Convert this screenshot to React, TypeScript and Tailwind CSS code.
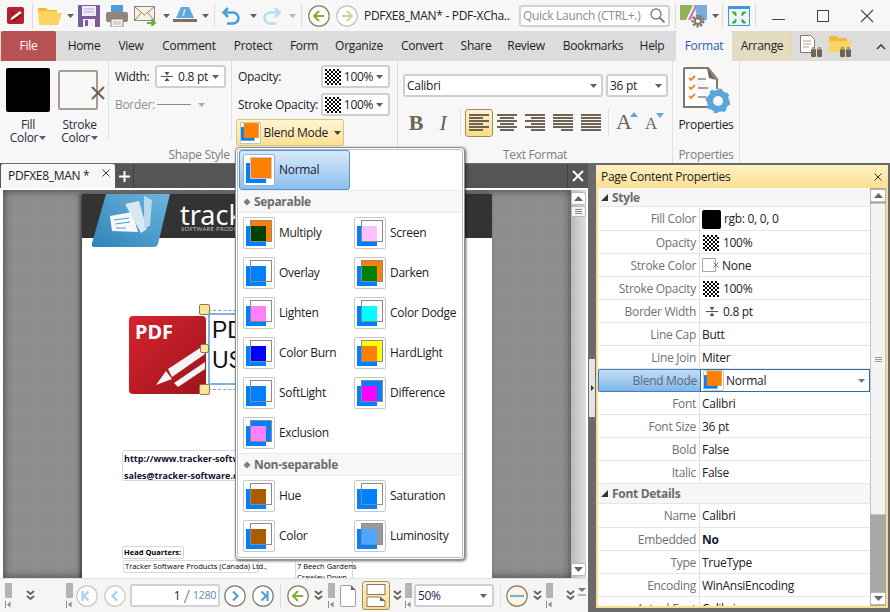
import React from "react"

const Caret = ({ className = "ml-[5px]", color = "#5f5f5f" }: { className?: string; color?: string }) => (
  <svg width="7" height="4" viewBox="0 0 7 4" className={`shrink-0 ${className}`}>
    <path d="M0 0h7L3.5 4z" fill={color} />
  </svg>
)

const Sep = ({ className = "" }: { className?: string }) => <div className={`w-px self-stretch my-[3px] bg-[#dcdcdc] shrink-0 ${className}`} />

const NavCircle = ({ className = "", dir = "left", color = "#7fb035", ring = "#8a7a68" }: { className?: string; dir?: "left" | "right"; color?: string; ring?: string }) => (
  <svg width="22" height="22" viewBox="0 0 22 22" className={`shrink-0 ${className}`}>
    <circle cx="11" cy="11" r="10.2" fill="#fff" stroke={ring} strokeWidth="1.2" />
    <g transform={dir === "right" ? "translate(22 0) scale(-1 1)" : undefined}>
      <path d="M11 6l-5 5 5 5M6 11h10" fill="none" stroke={color} strokeWidth="2" />
    </g>
  </svg>
)

const NavChevron = ({ className = "", dir = "left", edge = false, faded = false }: { className?: string; dir?: "left" | "right"; edge?: boolean; faded?: boolean }) => (
  <svg width="22" height="22" viewBox="0 0 22 22" className={`shrink-0 ${className}`}>
    <circle cx="11" cy="11" r="10.2" fill="#fff" stroke={faded ? "#d0c8be" : "#8a7a68"} strokeWidth="1.2" />
    <g transform={dir === "right" ? "translate(22 0) scale(-1 1)" : undefined}>
      <path d={edge ? "M12.5 6.5L8 11l4.5 4.5" : "M13 6.5L8.5 11l4.5 4.5"} fill="none" stroke={faded ? "#a8d0ea" : "#4da0d8"} strokeWidth="2.2" />
      {edge && <path d="M6.5 6v10" stroke={faded ? "#a8d0ea" : "#4da0d8"} strokeWidth="2.2" />}
    </g>
  </svg>
)

const Chevs = ({ className = "" }: { className?: string }) => (
  <svg width="9" height="12" viewBox="0 0 9 12" className={`shrink-0 ${className}`}>
    <path d="M1 1l3.5 3L8 1M1 6l3.5 3L8 6" fill="none" stroke="#6b6357" strokeWidth="1.8" />
  </svg>
)

const Grip = ({ className = "" }: { className?: string }) => (
  <div className={`flex flex-col items-center shrink-0 w-[8px] ${className}`}>
    <div className="w-[7px] h-[15px] bg-[radial-gradient(#b4b4b4_0.8px,transparent_0.9px)] bg-[length:2px_2px]" />
    <svg width="6" height="7" viewBox="0 0 6 7" className="mt-[3px]">
      <path d="M0.5 0v7" stroke="#8a8a8a" />
      <path d="M5.5 0.5v6L2 3.500z" fill="#8a8a8a" />
    </svg>
  </div>
)

const Checker = ({ size = 16 }: { size?: number }) => (
  <svg width={size} height={size} viewBox="0 0 16 16" className="shrink-0">
    <defs>
      <pattern id="chk" width="4" height="4" patternUnits="userSpaceOnUse">
        <rect width="4" height="4" fill="#fff" />
        <rect width="2" height="2" fill="#000" />
        <rect x="2" y="2" width="2" height="2" fill="#000" />
      </pattern>
    </defs>
    <rect width="16" height="16" fill="url(#chk)" />
  </svg>
)

const WidthGlyph = ({ className = "" }: { className?: string }) => (
  <svg width="14" height="11" viewBox="0 0 14 11" className={`shrink-0 ${className}`}>
    <path d="M1 5.500h12" stroke="#555" />
    <path d="M7 4.500L4.500 1h5zM7 6.500L4.500 10h5z" fill="#555" />
  </svg>
)

const Combo = ({ children, className = "" }: { children: React.ReactNode; className?: string }) => (
  <div className={`flex items-center bg-white border-2 border-[#cfcfcf] rounded-[3px] shrink-0 ${className}`}>{children}</div>
)

const BlendIcon = ({ top, mix, line = "#8a8a8a", scale = 1 }: { top: string; mix: string; line?: string; scale?: number }) => (
  <svg width={27 * scale} height={27 * scale} viewBox="0 0 27 27" className="shrink-0">
    <rect x="0" y="6" width="20" height="20" fill="#0080ff" />
    <rect x="4.500" y="0.500" width="21" height="21" fill={top} stroke={line} />
    <rect x="5" y="6" width="15" height="15" fill={mix} />
  </svg>
)

const blendRows = [
  [
    { name: "Multiply", top: "#ff8000", mix: "#004000" },
    { name: "Screen", top: "#ffffff", mix: "#ffc0ff" },
  ],
  [
    { name: "Overlay", top: "#ffffff", mix: "#0080ff" },
    { name: "Darken", top: "#ff8000", mix: "#008000" },
  ],
  [
    { name: "Lighten", top: "#ffffff", mix: "#ff80ff" },
    { name: "Color Dodge", top: "#ffffff", mix: "#00ffff" },
  ],
  [
    { name: "Color Burn", top: "#ffffff", mix: "#0000ff" },
    { name: "HardLight", top: "#ffff00", mix: "#ff8000" },
  ],
  [
    { name: "SoftLight", top: "#ffffff", mix: "#0080ff" },
    { name: "Difference", top: "#0080ff", mix: "#ff00ff" },
  ],
  [{ name: "Exclusion", top: "#0080ff", mix: "#ff80ff" }],
]

const nonSepRows = [
  [
    { name: "Hue", top: "#ffffff", mix: "#ab5b00" },
    { name: "Saturation", top: "#ffffff", mix: "#0080ff" },
  ],
  [
    { name: "Color", top: "#ffffff", mix: "#ab5b00" },
    { name: "Luminosity", top: "#999999", mix: "#4da6ff" },
  ],
]

const BlendGrid = ({ rows }: { rows: { name: string; top: string; mix: string }[][] }) => (
  <div className="flex flex-col">
    {rows.map((row, i) => (
      <div key={i} className="grid grid-cols-[111px_1fr] h-[40px] pl-[5px]">
        {row.map((m) => (
          <div key={m.name} className="flex items-start">
            <div className="w-[32px] h-[32px] mt-[4px] flex items-center justify-center bg-white border border-[#c8c8c8] rounded-[2px] shrink-0">
              <BlendIcon top={m.top} mix={m.mix} />
            </div>
            <span className="ml-[4px] mt-[12px] leading-[16px] whitespace-nowrap">{m.name}</span>
          </div>
        ))}
      </div>
    ))}
  </div>
)

const BlendHeader = ({ label }: { label: string }) => (
  <div className="h-[23px] mx-[1px] flex items-center pl-[4px] pt-[1px] bg-[#f7f7f7] border-y border-[#ebebeb] font-bold text-[#6c6c6c]">
    <svg width="8" height="8" viewBox="0 0 8 8" className="mr-[3px]">
      <path d="M4 0.500L7.500 4 4 7.500.5 4z" fill="#7d7d7d" />
    </svg>
    {label}
  </div>
)

const BlendPopup = () => (
  <div className="absolute left-[235px] top-[147px] w-[230px] h-[413px] z-20 bg-white border border-[#8c8c8c] rounded-[4px] p-[1px] shadow-[1px_1px_3px_rgba(0,0,0,0.6)] text-[#1b1b2b]">
    <div className="w-full h-full border border-[#bdbdbd] rounded-[3px] bg-white">
      <div className="flex items-center w-[111px] h-[40px] ml-[1px] pl-[3px] bg-[linear-gradient(#d8e9f9,#8dbfec)] border border-[#4f95d6] rounded-[3px]">
        <div className="w-[32px] h-[32px] flex items-center justify-center bg-white border border-[#9cb4ca] rounded-[2px]">
          <BlendIcon top="#ff8000" mix="#ff8000" line="#c8c8c8" />
        </div>
        <span className="ml-[4px]">Normal</span>
      </div>
      <BlendHeader label="Separable" />
      <BlendGrid rows={blendRows} />
      <BlendHeader label="Non-separable" />
      <BlendGrid rows={nonSepRows} />
    </div>
  </div>
)

const TitleBar = () => (
  <div className="flex items-center h-[31px] pl-[7px] bg-[#f7f7f7] shrink-0">
    <svg width="17" height="17" viewBox="0 0 17 17" className="shrink-0">
      <rect width="17" height="17" rx="2" fill="#b3222c" />
      <path d="M3 13l2-3 8-6 1.500 2-8 6z" fill="#fff" />
      <path d="M6 13l8-5.500v1.500l-7 5zM3 6h5" stroke="#7c151c" fill="none" />
    </svg>
    <Sep className="ml-[8px]" />
    <svg width="24" height="20" viewBox="0 0 24 20" className="ml-[5px] shrink-0">
      <path d="M0 2h8l2 2h9v3H0z" fill="#f3b93e" />
      <path d="M1 19L0 5h19v2h5l-4 12z" fill="#fbd35f" />
    </svg>
    <Caret />
    <svg width="22" height="22" viewBox="0 0 22 22" className="ml-[4px] shrink-0">
      <path d="M0 1a1 1 0 011-1h20a1 1 0 011 1v20a1 1 0 01-1 1H1a1 1 0 01-1-1z" fill="#7c5a9b" />
      <rect x="4" y="1" width="14" height="10" fill="#f0ebf3" />
      <path d="M6 4h10M6 7h10" stroke="#b9a9c8" />
      <rect x="5" y="14" width="12" height="8" fill="#f4f2f6" />
      <rect x="7" y="15" width="3" height="6" fill="#7c5a9b" />
    </svg>
    <svg width="22" height="22" viewBox="0 0 22 22" className="ml-[6px] shrink-0">
      <rect x="5" y="0" width="12" height="7" fill="#4f9bd4" />
      <rect x="0" y="7" width="22" height="10" rx="2" fill="#8f8578" />
      <rect x="5" y="14" width="12" height="8" fill="#f5f5f5" stroke="#8f8578" />
      <path d="M7 17h8M7 19h8" stroke="#b8b0a4" />
    </svg>
    <svg width="24" height="21" viewBox="0 0 24 21" className="ml-[6px] shrink-0">
      <rect x="0.500" y="1.500" width="20" height="14" fill="#f7f2e2" stroke="#8f8578" />
      <path d="M1 2l9.500 8L20 2M1 15l6-7M20 15l-6-7" fill="none" stroke="#8f8578" />
      <path d="M13 18h7M17 14.500l4 3.500-4 3" fill="none" stroke="#71ad38" strokeWidth="2" />
    </svg>
    <Caret />
    <svg width="24" height="17" viewBox="0 0 24 17" className="ml-[3px] shrink-0">
      <path d="M8 0h8l5 11H3z" fill="#5fa8dc" />
      <path d="M11 2h2L11 9H9z" fill="#b7dcf3" />
      <rect x="0" y="12" width="24" height="3" fill="#7c7062" />
    </svg>
    <Caret />
    <Sep className="ml-[5px]" />
    <svg width="18" height="19" viewBox="0 0 18 19" className="ml-[7px] shrink-0">
      <path d="M6 2L1.500 6.500 6 11M2 6.500h9a5.500 5.500 0 010 11H5" fill="none" stroke="#4d9fdb" strokeWidth="2.600" />
    </svg>
    <Caret className="ml-[10px]" />
    <svg width="20" height="19" viewBox="0 0 20 19" className="ml-[5px] shrink-0">
      <path d="M13 2l4.500 4.500L13 11M17 6.500H8a5.500 5.500 0 000 11h6" fill="none" stroke="#b9dcf0" strokeWidth="2.600" />
    </svg>
    <Caret className="ml-[7px]" color="#b4b4b4" />
    <Sep className="ml-[5px]" />
    <NavCircle className="ml-[6px]" />
    <NavCircle className="ml-[6px]" dir="right" color="#bcd89a" ring="#c9c2b8" />
    <span className="ml-[6px] w-[154px] whitespace-nowrap overflow-hidden">PDFXE8_MAN* - PDF-XCha..</span>
    <div className="ml-[1px] w-[151px] h-[22px] flex items-center justify-between bg-white border-2 border-[#d2d2d2] rounded-[3px] pl-[2px] pr-[3px] shrink-0">
      <span className="text-[#8d8d8d] whitespace-nowrap">Quick Launch (CTRL+.)</span>
      <svg width="15" height="15" viewBox="0 0 15 15">
        <circle cx="6" cy="6" r="5" fill="none" stroke="#7b7b7b" strokeWidth="1.300" />
        <path d="M9.500 9.500l5 5" stroke="#7b7b7b" strokeWidth="1.800" />
      </svg>
    </div>
    <Sep className="ml-[5px]" />
    <svg width="28" height="24" viewBox="0 0 28 24" className="ml-[4px] shrink-0">
      <path d="M0 1h13L6 16H0z" fill="#8fb354" />
      <path d="M14 1h13v15H18z" fill="#77aedd" />
      <path d="M15 1L8 16h3l6-15z" fill="#c97fb1" />
      <circle cx="18" cy="17" r="5" fill="none" stroke="#85786a" strokeWidth="3" strokeDasharray="2.200 1.300" />
      <circle cx="18" cy="17" r="3" fill="none" stroke="#85786a" strokeWidth="1.800" />
    </svg>
    <Caret className="ml-[4px]" />
    <Sep className="ml-[3px]" />
    <svg width="22" height="20" viewBox="0 0 22 20" className="ml-[5px] shrink-0">
      <rect x="0.500" y="0.500" width="21" height="19" fill="#eaf6fd" stroke="#3c9ad8" />
      <rect x="0" y="0" width="22" height="3" fill="#3c9ad8" />
      <path d="M4 6l4 4V7l-1-1zM18 6l-4 4V7l1-1zM4 17l4-4v3l-1 1zM18 17l-4-4v3l1 1z" fill="#5da832" stroke="#5da832" />
    </svg>
    <Sep className="ml-[5px]" />
    <div className="ml-[16px] w-[13px] h-px bg-[#444] mt-[8px] shrink-0" />
    <div className="ml-[32px] w-[12px] h-[12px] border border-[#444] shrink-0" />
    <svg width="14" height="14" viewBox="0 0 14 14" className="ml-[31px] shrink-0">
      <path d="M1 1l12 12M13 1L1 13" stroke="#444" strokeWidth="1.100" />
    </svg>
  </div>
)

const tabs = [
  { label: "Home", w: "w-[54px]" },
  { label: "View", w: "w-[40px]" },
  { label: "Comment", w: "w-[76px]" },
  { label: "Protect", w: "w-[52px]" },
  { label: "Form", w: "w-[50px]" },
  { label: "Organize", w: "w-[60px]" },
  { label: "Convert", w: "w-[66px]" },
  { label: "Share", w: "w-[42px]" },
  { label: "Review", w: "w-[58px]" },
  { label: "Bookmarks", w: "w-[76px]" },
  { label: "Help", w: "w-[42px]" },
]

const TabBar = () => (
  <div className="flex items-stretch h-[30px] bg-[#dcdcdc] shrink-0">
    <div className="ml-[1px] w-[55px] bg-[#b95353] text-white flex items-center justify-center rounded-t-[2px]">File</div>
    <div className="ml-[1px] flex">
      {tabs.map((t) => (
        <div key={t.label} className={`${t.w} flex items-center justify-center`}>
          {t.label}
        </div>
      ))}
    </div>
    <div className="ml-[3px] w-[56px] bg-[#f7f7f7] text-[#1f5fa8] flex items-center justify-center rounded-t-[3px]">Format</div>
    <div className="ml-[1px] w-[59px] bg-[#e4dcc0] border-r border-[#eed98f] flex items-center justify-center">Arrange</div>
    <svg width="24" height="24" viewBox="0 0 24 24" className="ml-[7px] mt-[3px] shrink-0">
      <path d="M1.500 1.500h10l4 4v13h-14z" fill="#fff" stroke="#85786a" />
      <path d="M4 7h8M4 10h8M4 13h6" stroke="#a79c8e" />
      <rect x="12" y="15" width="5" height="8" rx="1" fill="#6f6355" />
      <rect x="18" y="15" width="5" height="8" rx="1" fill="#6f6355" />
      <rect x="13" y="13" width="3" height="3" fill="#9d9385" />
      <rect x="19" y="13" width="3" height="3" fill="#9d9385" />
    </svg>
    <svg width="24" height="24" viewBox="0 0 24 24" className="ml-[5px] mt-[3px] shrink-0">
      <path d="M1 2h8l2 2h8v4H1z" fill="#f3b93e" />
      <path d="M1 18V7h23l-4 11z" fill="#fbd35f" />
      <rect x="12" y="15" width="5" height="8" rx="1" fill="#6f6355" />
      <rect x="18" y="15" width="5" height="8" rx="1" fill="#6f6355" />
      <rect x="13" y="13" width="3" height="3" fill="#9d9385" />
      <rect x="19" y="13" width="3" height="3" fill="#9d9385" />
    </svg>
    <svg width="10" height="7" viewBox="0 0 10 7" className="ml-[24px] mt-[12px] shrink-0">
      <path d="M1 6l4-4 4 4" fill="none" stroke="#444" strokeWidth="1.600" />
    </svg>
  </div>
)

const AlignBtn = ({ lines, active = false }: { lines: [number, number][]; active?: boolean }) => (
  <div className={`w-[28px] h-[28px] flex items-center justify-center shrink-0 ${active ? "bg-[linear-gradient(#fdf3cf,#fbdc8a)] border border-[#9f8f5f] rounded-[3px]" : ""}`}>
    <svg width="20" height="20" viewBox="0 0 20 20">
      {lines.map(([x, w], i) => (
        <rect key={i} x={x} y={i * 3 + 1} width={w} height="2" fill="#6f6355" />
      ))}
    </svg>
  </div>
)

const Ribbon = () => (
  <div className="flex h-[102px] bg-[#f7f7f7] shrink-0 relative">
    <div className="w-[397px] ml-[1px] flex flex-col border-r border-[#dfdfdf] shrink-0">
      <div className="flex h-[85px] shrink-0">
        {/* fill / stroke */}
        <div className="w-[108px] h-[85px] flex shrink-0 border-r-0 relative">
          <div className="absolute right-0 top-0 h-[78px] w-px bg-[#dfdfdf]" />
          <div className="w-[44px] ml-[5px] flex flex-col items-center mt-[7px] shrink-0">
            <div className="w-[44px] h-[44px] bg-black rounded-[2px] shrink-0" />
            <div className="mt-[6px] leading-[13px] text-center text-[#2b2b3b]">
              Fill
              <div className="flex items-center">
                Color
                <Caret className="ml-[1px]" />
              </div>
            </div>
          </div>
          <div className="w-[49px] ml-[5px] flex flex-col items-center shrink-0 mt-[7px]">
            <div className="h-[44px] w-[49px] relative shrink-0">
              <div className="absolute left-[3px] top-[2px] w-[40px] h-[40px] bg-[#f7f7f7] border-2 border-[#a99c8d] rounded-[2px]" />
              <svg width="14" height="14" viewBox="0 0 14 14" className="absolute left-[36px] top-[18px]">
                <path d="M1 1l12 12M13 1L1 13" stroke="#6f6355" strokeWidth="2" />
              </svg>
            </div>
            <div className="mt-[6px] leading-[13px] text-center text-[#2b2b3b]">
              Stroke
              <div className="flex items-center justify-center">
                Color
                <Caret className="ml-[1px]" />
              </div>
            </div>
          </div>
        </div>
        {/* width / border */}
        <div className="w-[123px] h-[78px] pl-[6px] pt-[4px] flex flex-col shrink-0 border-r border-[#dfdfdf]">
          <div className="flex items-center h-[23px]">
            <span className="w-[40px]">Width:</span>
            <Combo className="w-[71px] h-[23px] pl-[3px] pr-[5px] justify-between">
              <WidthGlyph />
              <span>0.8 pt</span>
              <Caret className="ml-0" />
            </Combo>
          </div>
          <div className="flex items-center h-[23px] mt-[5px] text-[#8f8f8f]">
            <span className="w-[42px]">Border:</span>
            <div className="w-[34px] h-px bg-[#8f8f8f]" />
            <Caret className="ml-[7px]" color="#a8a8a8" />
          </div>
        </div>
        {/* opacity */}
        <div className="flex flex-col pl-[4px] pt-[4px] relative">
          <div className="flex items-center h-[23px] pl-[2px]">
            <span className="w-[83px] pt-[1px]">Opacity:</span>
            <Combo className="w-[69px] h-[23px] px-[2px] justify-between pr-[5px]">
              <Checker />
              <span>100%</span>
              <Caret className="ml-0" />
            </Combo>
          </div>
          <div className="flex items-center h-[23px] mt-[5px] pl-[2px]">
            <span className="w-[83px] pt-[1px] whitespace-nowrap">Stroke Opacity:</span>
            <Combo className="w-[69px] h-[23px] px-[2px] justify-between pr-[5px]">
              <Checker />
              <span>100%</span>
              <Caret className="ml-0" />
            </Combo>
          </div>
          <div className="flex items-center w-[108px] h-[27px] mt-[3px] pl-[3px] pr-[2px] bg-[linear-gradient(#fff6d2,#fbe096)] border border-[#dcc67f] rounded-[2px]">
            <div className="w-[22px] h-[22px] flex items-center justify-center bg-white border border-[#cfc6a0]">
              <BlendIcon top="#ff8000" mix="#ff8000" line="#ff8000" scale={0.68} />
            </div>
            <span className="ml-[3px] whitespace-nowrap">Blend Mode</span>
            <Caret className="ml-[6px]" color="#444" />
          </div>
        </div>
      </div>
      <div className="h-[17px] pt-[2px] leading-[14px] text-center text-[#7d7d7d]">Shape Style</div>
    </div>
    <div className="w-[275px] flex flex-col border-r border-[#dfdfdf] shrink-0">
      <div className="h-[85px] pl-[5px] pt-[13px] shrink-0">
        <div className="flex">
          <Combo className="w-[200px] h-[23px] pl-[2px] pr-[4px] justify-between">
            <span>Calibri</span>
            <Caret className="ml-0" />
          </Combo>
          <Combo className="ml-[3px] w-[62px] h-[23px] pl-[2px] pr-[4px] justify-between">
            <span>36 pt</span>
            <Caret className="ml-0" />
          </Combo>
        </div>
        <div className="flex items-center mt-[12px] text-[#6f6355]">
          <span className="ml-[5px] w-[16px] text-center text-[22px] leading-[28px] font-bold font-['Liberation_Serif',serif]">B</span>
          <span className="ml-[11px] w-[16px] text-center text-[22px] leading-[28px] italic font-['Liberation_Serif',serif]">I</span>
          <div className="ml-[9px] w-px h-[26px] bg-[#dfdfdf]" />
          <div className="ml-[4px] flex gap-0">
            <AlignBtn active lines={[[0, 20], [0, 14], [0, 20], [0, 14], [0, 20], [0, 14]]} />
            <AlignBtn lines={[[0, 20], [3, 14], [0, 20], [3, 14], [0, 20], [3, 14]]} />
            <AlignBtn lines={[[0, 20], [6, 14], [0, 20], [6, 14], [0, 20], [6, 14]]} />
            <AlignBtn lines={[[0, 20], [0, 20], [0, 20], [0, 20], [0, 20], [8, 12]]} />
            <AlignBtn lines={[[0, 20], [0, 20], [0, 20], [0, 20], [0, 20], [0, 20]]} />
          </div>
          <div className="ml-[3px] w-px h-[26px] bg-[#dfdfdf]" />
          <div className="ml-[7px] relative w-[22px] h-[22px]">
            <span className="absolute left-0 top-[-3px] text-[22px] leading-[26px] font-['Liberation_Serif',serif]">A</span>
            <svg width="8" height="5" viewBox="0 0 8 5" className="absolute left-[14px] top-[0px]">
              <path d="M0 5h8L4 0z" fill="#5da8dc" />
            </svg>
          </div>
          <div className="ml-[7px] relative w-[20px] h-[22px]">
            <span className="absolute left-0 top-[1px] text-[17px] leading-[22px] font-['Liberation_Serif',serif]">A</span>
            <svg width="8" height="5" viewBox="0 0 8 5" className="absolute left-[11px] top-[1px]">
              <path d="M0 0h8L4 5z" fill="#5da8dc" />
            </svg>
          </div>
        </div>
      </div>
      <div className="h-[17px] pt-[2px] leading-[14px] text-center text-[#7d7d7d]">Text Format</div>
    </div>
    <div className="w-[67px] flex flex-col items-center border-r border-[#dfdfdf] shrink-0">
      <div className="h-[85px] flex flex-col items-center pt-[6px] shrink-0">
        <svg width="47" height="46" viewBox="0 0 47 46" className="shrink-0">
          <path d="M1 1h24l9 11v10M29 40H1V1" fill="#fff" stroke="#85786a" strokeWidth="2" />
          <path d="M24 1l9 12-7-2z" fill="#6f6355" />
          <path d="M6 11l2 2 4-4M6 20l2 2 4-4M6 29l2 2 4-4" fill="none" stroke="#e58a2c" strokeWidth="1.800" />
          <path d="M15 12h8M15 21h10M15 30h8" stroke="#8f8578" strokeWidth="1.500" />
          <circle cx="35" cy="34" r="8" fill="none" stroke="#5aa5d9" strokeWidth="6" />
          <circle cx="35" cy="34" r="11" fill="none" stroke="#5aa5d9" strokeWidth="3" strokeDasharray="4 4.600" />
        </svg>
        <span className="mt-[4px] leading-[16px]">Properties</span>
      </div>
      <div className="h-[17px] pt-[2px] leading-[14px] text-center text-[#7d7d7d]">Properties</div>
    </div>
  </div>
)

const Page = () => (
  <div className="absolute left-[79px] top-[4px] w-[410px] h-[385px] bg-white shadow-[-2px_0_4px_rgba(0,0,0,0.6)] overflow-hidden text-black tracking-normal">
    <div className="h-[44px] bg-[#333333] relative">
      <span className="absolute left-[98px] top-[5px] text-[27px] leading-[32px] text-white font-['Noto_Sans',sans-serif]">tracker</span>
      <span className="absolute left-[99px] top-[31px] text-[6px] leading-[8px] text-[#c8c8c8] whitespace-nowrap tracking-[0.3px]">SOFTWARE PRODUCTS</span>
    </div>
    <svg width="80" height="54" viewBox="0 0 80 54" className="absolute left-[10px] top-0">
      <defs>
        <linearGradient id="lg" x1="0" y1="1" x2="1" y2="0">
          <stop offset="0" stopColor="#2f83b8" />
          <stop offset="1" stopColor="#6db5dd" />
        </linearGradient>
      </defs>
      <path d="M14 0h64l-12 50q-1 3-4 3H2q-3 0-2-4z" fill="url(#lg)" />
      <path d="M18 22l22-4 6 20-26-1z" fill="#f4f9fc" />
      <path d="M22 26l15-2M23 30l15-2M24 34h10" stroke="#4f9cca" />
      <path d="M33 10l14-3 8 28-6 4z" fill="#d7e8f2" />
      <path d="M52 2l8 4-2 26-6 2z" fill="#bcd8e8" />
    </svg>

    {/* PDF tile with selection */}
    <div className="absolute left-[47px] top-[122px] w-[77px] h-[78px] rounded-[4px] bg-[linear-gradient(135deg,#d8232f,#9c151c)]">
      <span className="absolute left-[6px] top-[3px] text-[20px] leading-[26px] font-bold text-white font-['Noto_Sans',sans-serif]">PDF</span>
      <svg width="52" height="44" viewBox="0 0 52 44" className="absolute left-[25px] top-[31px]">
        <path d="M2 38l10-14 6 8z" fill="#f4f4f4" />
        <path d="M14 22L46 1l5 6-33 23z" fill="#f4f4f4" />
        <path d="M20 36l31-21v7L24 40z" fill="#f4f4f4" />
      </svg>
    </div>
    <div className="absolute left-[126px] top-[116px] w-[120px] h-[80px] border-y border-dashed border-[#9a9a9a]" />
    <div className="absolute left-[126px] top-[119px] w-[40px] h-[72px] border-2 border-[#7fb2e0] bg-white pl-[2px] text-[23px] leading-[30px] font-['Liberation_Sans',sans-serif] text-[#111] overflow-hidden whitespace-nowrap">
      <div>PDF</div>
      <div>USE</div>
    </div>
    <div className="absolute left-[117px] top-[110px] w-[11px] h-[11px] bg-[#fde49a] border border-[#8a7a50] rounded-[2px]" />
    <div className="absolute left-[118px] top-[150px] w-[9px] h-[9px] bg-[#fde49a] border border-[#8a7a50] rounded-[2px]" />
    <div className="absolute left-[117px] top-[190px] w-[11px] h-[11px] bg-[#fde49a] border border-[#8a7a50] rounded-[2px]" />

    <div className="absolute left-[40px] top-[256px] w-[190px] h-[31px] border border-[#d8d8d8] rounded-[2px] pl-[1px] text-[9px] leading-[17px] font-bold text-[#101030] font-['Open_Sans',sans-serif] whitespace-nowrap">
      <div className="-mt-[1px]">http://www.tracker-software.com</div>
      <div>sales@tracker-software.com</div>
    </div>
    <div className="absolute left-[40px] top-[352px] w-[62px] h-[13px] border border-[#d8d8d8] rounded-[2px] pl-[1px] text-[7.500px] leading-[11px] font-bold font-['Open_Sans',sans-serif] whitespace-nowrap">Head Quarters:</div>
    <div className="absolute left-[41px] top-[366px] w-[136px] h-[13px] border border-[#d8d8d8] rounded-[2px] pl-[1px] text-[7.500px] leading-[11px] whitespace-nowrap font-['Open_Sans',sans-serif]">Tracker Software Products (Canada) Ltd.,</div>
    <div className="absolute left-[213px] top-[367px] w-[58px] h-[24px] border-x border-[#d8d8d8] pl-[1px] text-[7.500px] leading-[11px] whitespace-nowrap font-['Open_Sans',sans-serif]">
      <div>7 Beech Gardens</div>
      <div>Crawley Down</div>
    </div>
  </div>
)

const ScrollBar = () => (
  <div className="w-[15px] flex flex-col bg-[linear-gradient(90deg,#b9b9b9,#dedede)] shrink-0 py-[2px]">
    <div className="h-[13px] bg-white border border-[#b8b8b8] rounded-[2px] flex items-center justify-center">
      <svg width="9" height="5" viewBox="0 0 9 5">
        <path d="M0 5h9L4.500 0z" fill="#666" />
      </svg>
    </div>
    <div className="h-[11px] mt-[1px] bg-[#f4f4f4] border border-[#b8b8b8] rounded-[2px] flex flex-col items-center justify-center gap-px">
      <div className="w-[7px] h-px bg-[#888]" />
      <div className="w-[7px] h-px bg-[#888]" />
      <div className="w-[7px] h-px bg-[#888]" />
    </div>
    <div className="flex-1" />
    <div className="h-[13px] bg-white border border-[#b8b8b8] rounded-[2px] flex items-center justify-center">
      <svg width="9" height="5" viewBox="0 0 9 5">
        <path d="M0 0h9L4.500 5z" fill="#666" />
      </svg>
    </div>
  </div>
)

const DocArea = () => (
  <div className="flex-1 min-h-0 flex flex-col">
    <div className="h-[24px] mt-[1px] flex items-stretch bg-[#555] shrink-0">
      <div className="w-[114px] ml-[1px] bg-[#f7f7f7] flex items-center pl-[7px] rounded-t-[2px] relative">
        <span className="whitespace-nowrap">PDFXE8_MAN *</span>
        <svg width="8" height="8" viewBox="0 0 8 8" className="absolute left-[101px] top-[5px]">
          <path d="M0.500.5l7 7M7.500.5l-7 7" stroke="#333" />
        </svg>
      </div>
      <div className="w-[19px] border-r border-[#3f3f3f] flex items-center justify-center">
        <svg width="11" height="11" viewBox="0 0 11 11">
          <path d="M5.500 0v11M0 5.500h11" stroke="#fff" strokeWidth="2" />
        </svg>
      </div>
      <div className="flex-1" />
      <div className="w-[20px] mr-[1px] border-l border-[#3f3f3f] flex items-center justify-center">
        <svg width="12" height="12" viewBox="0 0 12 12">
          <path d="M1 1l10 10M11 1L1 11" stroke="#fff" strokeWidth="2" />
        </svg>
      </div>
    </div>
    <div className="flex-1 min-h-0 flex bg-white pl-[3px] pt-[2px] pr-[2px] relative">
      <div className="flex-1 relative overflow-hidden bg-[#8f8f8f] bg-[radial-gradient(#828282_0.8px,transparent_1px)] bg-[length:3px_3px] shadow-[inset_0_0_10px_rgba(0,0,0,0.55)]">
        <Page />
      </div>
      <ScrollBar />
    </div>
  </div>
)

const BottomBar = () => (
  <div className="h-[34px] bg-[#f5f5f5] flex items-center pl-[4px] shrink-0 border-t border-[#e2e2e2]">
    <Grip />
    <Chevs className="ml-[14px]" />
    <Grip className="ml-[30px]" />
    <NavChevron className="ml-[3px]" edge faded />
    <NavChevron className="ml-[6px]" faded />
    <div className="ml-[4px] w-[90px] h-[23px] bg-white border-2 border-[#d2d2d2] rounded-[3px] flex items-center justify-end pr-[2px] shrink-0 tracking-normal">
      <span className="text-[#222]">1</span>
      <span className="text-[18px] leading-[18px] text-[#6f6355] font-light mx-[3px]">/</span>
      <span className="text-[11px] text-[#6b8ba8] self-start mt-[1px] tracking-[-0.5px]">1280</span>
    </div>
    <NavChevron className="ml-[4px]" dir="right" />
    <NavChevron className="ml-[6px]" dir="right" edge />
    <div className="ml-[6px] w-px h-[24px] bg-[#dcdcdc]" />
    <NavCircle className="ml-[6px]" />
    <Chevs className="ml-[5px]" />
    <Grip className="ml-[4px]" />
    <svg width="16" height="22" viewBox="0 0 16 22" className="ml-[5px] shrink-0">
      <path d="M.5 2a1.500 1.500 0 011.500-1.500h9l4.500 4.500v15a1.500 1.500 0 01-1.500 1.500h-12a1.500 1.500 0 01-1.500-1.500z" fill="#fff" stroke="#a89c8e" />
      <path d="M11 .5l4.500 4.500h-4.500z" fill="#6f6355" />
    </svg>
    <div className="ml-[6px] w-[28px] h-[29px] bg-[linear-gradient(#fdf3cf,#fbdc8a)] border border-[#9f8f5f] rounded-[3px] flex items-center justify-center shrink-0">
      <svg width="20" height="23" viewBox="0 0 20 23">
        <rect x="1" y="0.500" width="18" height="10" fill="#fff" stroke="#85786a" />
        <path d="M1 13h13l5 4v5.500H1z" fill="#fff" stroke="#85786a" />
        <path d="M14 13l5 4h-5z" fill="#6f6355" />
      </svg>
    </div>
    <Chevs className="ml-[3px]" />
    <Grip className="ml-[2px]" />
    <Combo className="ml-[2px] w-[80px] h-[23px] pl-[2px] pr-[5px] justify-between">
      <span className="text-[#1b2b4b]">50%</span>
      <Caret className="ml-0" />
    </Combo>
    <div className="ml-[6px] w-px h-[24px] bg-[#dcdcdc]" />
    <svg width="22" height="22" viewBox="0 0 22 22" className="ml-[5px] shrink-0">
      <circle cx="11" cy="11" r="10.200" fill="#fdf6e0" stroke="#8a7a68" strokeWidth="1.200" />
      <path d="M4 11h14" stroke="#76b4e0" strokeWidth="2.200" />
    </svg>
    <Chevs className="ml-[5px]" />
    <Grip className="ml-[3px]" />
    <Chevs className="ml-[13px]" />
    <svg width="9" height="9" viewBox="0 0 9 9" className="ml-[3px] mb-[6px] shrink-0">
      <path d="M0 0h8L4 4z" fill="#7a7a7a" />
      <path d="M0 7h8" stroke="#7a7a7a" />
    </svg>
  </div>
)

type Row = { label: string; value?: string; node?: React.ReactNode; bold?: boolean; first?: boolean }

const styleRows: Row[] = [
  {
    label: "Fill Color",
    first: true,
    node: (
      <>
        <div className="w-[19px] h-[19px] bg-black rounded-[2px] shrink-0" />
        <span className="ml-[3px]">rgb: 0, 0, 0</span>
      </>
    ),
  },
  {
    label: "Opacity",
    node: (
      <>
        <div className="ml-[1px]">
          <Checker />
        </div>
        <span className="ml-[4px]">100%</span>
      </>
    ),
  },
  {
    label: "Stroke Color",
    node: (
      <>
        <div className="relative w-[19px] h-[15px] shrink-0">
          <div className="w-[14px] h-[14px] border border-[#a8a8a8] bg-white" />
          <svg width="6" height="6" viewBox="0 0 6 6" className="absolute left-[11px] top-[4px]">
            <path d="M.5.5l5 5M5.500.5l-5 5" stroke="#777" />
          </svg>
        </div>
        <span className="ml-[1px]">None</span>
      </>
    ),
  },
  {
    label: "Stroke Opacity",
    node: (
      <>
        <div className="ml-[1px]">
          <Checker />
        </div>
        <span className="ml-[4px]">100%</span>
      </>
    ),
  },
  {
    label: "Border Width",
    node: (
      <>
        <WidthGlyph className="ml-[3px]" />
        <span className="ml-[4px]">0.8 pt</span>
      </>
    ),
  },
  { label: "Line Cap", value: "Butt" },
  { label: "Line Join", value: "Miter" },
]

const PropRow = ({ r }: { r: Row }) => (
  <div className={`flex border-b border-[#e6e6e6] shrink-0 ${r.first ? "h-[24px]" : "h-[23px]"}`}>
    <div className="w-[102px] pr-[3px] text-right text-[#6f6f7a] leading-[24px] border-r border-[#e0e0e0] shrink-0 whitespace-nowrap">{r.label}</div>
    <div className={`pl-[2px] pt-[1px] flex items-center whitespace-nowrap ${r.bold ? "font-bold" : ""}`}>{r.node ?? r.value}</div>
  </div>
)

const GroupHead = ({ label, className = "h-[20px]" }: { label: string; className?: string }) => (
  <div className={`flex items-center bg-[#f6f6f6] border-b border-[#e6e6e6] font-bold text-[#6c6c6c] pl-[3px] pt-[1px] shrink-0 ${className}`}>
    <svg width="7" height="7" viewBox="0 0 7 7" className="mr-[4px] mb-[1px]">
      <path d="M7 0v7H0z" fill="#333" />
    </svg>
    {label}
  </div>
)

const PropsPanel = () => (
  <div className="w-[294px] h-full bg-[#6a6a6a] pr-[2px] pt-[2px] pb-[4px] shrink-0">
    <div className="h-full flex flex-col bg-[#f7dd8f] rounded-t-[2px] px-[2px] pb-[2px]">
      <div className="h-[23px] flex items-center justify-between pl-[5px] pr-[6px] bg-[linear-gradient(#fff1c2,#fbdf92)] -mx-[2px] shrink-0">
        <span className="whitespace-nowrap">Page Content Properties</span>
        <svg width="8" height="8" viewBox="0 0 8 8">
          <path d="M.5.5l7 7M7.500.5l-7 7" stroke="#333" />
        </svg>
      </div>
      <div className="flex-1 min-h-0 flex bg-white overflow-hidden">
        <div className="w-[272px] flex flex-col overflow-hidden shrink-0">
          <GroupHead label="Style" className="h-[19px]" />
          {styleRows.map((r) => (
            <PropRow key={r.label} r={r} />
          ))}
          <div className="flex h-[23px] shrink-0">
            <div className="w-[102px] pr-[3px] text-right text-[#5a6a7a] leading-[22px] bg-[linear-gradient(#c3ddf4,#7fb6e8)] border border-[#3f7fbf] border-r-0 rounded-l-[2px] shrink-0">Blend Mode</div>
            <div className="flex-1 flex items-center border border-[#2f6fa0] pl-[2px] pr-[4px]">
              <div className="w-[21px] h-[21px] flex items-center justify-center bg-white border border-[#c8c8c8] rounded-[2px] shrink-0">
                <BlendIcon top="#ff8000" mix="#ff8000" line="#ff8000" scale={0.68} />
              </div>
              <span className="ml-[2px]">Normal</span>
              <Caret className="ml-auto" color="#7a7a7a" />
            </div>
          </div>
          <PropRow r={{ label: "Font", value: "Calibri" }} />
          <PropRow r={{ label: "Font Size", value: "36 pt" }} />
          <PropRow r={{ label: "Bold", value: "False" }} />
          <PropRow r={{ label: "Italic", value: "False" }} />
          <GroupHead label="Font Details" />
          <PropRow r={{ label: "Name", value: "Calibri", first: true }} />
          <PropRow r={{ label: "Embedded", value: "No", bold: true }} />
          <PropRow r={{ label: "Type", value: "TrueType" }} />
          <PropRow r={{ label: "Encoding", value: "WinAnsiEncoding" }} />
          <PropRow r={{ label: "Actual Font", value: "Calibri" }} />
        </div>
        <div className="w-[16px] flex flex-col bg-[#a8a8a8] shrink-0 pt-[1px] pb-[1px]">
          <div className="h-[13px] bg-white border border-[#b8b8b8] rounded-[2px] flex items-center justify-center shrink-0">
            <svg width="9" height="5" viewBox="0 0 9 5">
              <path d="M0 5h9L4.500 0z" fill="#666" />
            </svg>
          </div>
          <div className="h-[312px] mt-[1px] bg-[#f4f4f4] border border-[#c4c4c4] rounded-[2px] flex flex-col items-center justify-center gap-px shrink-0">
            <div className="w-[7px] h-px bg-[#999]" />
            <div className="w-[7px] h-px bg-[#999]" />
            <div className="w-[7px] h-px bg-[#999]" />
          </div>
          <div className="flex-1" />
          <div className="h-[13px] bg-white border border-[#b8b8b8] rounded-[2px] flex items-center justify-center shrink-0">
            <svg width="9" height="5" viewBox="0 0 9 5">
              <path d="M0 0h9L4.500 5z" fill="#666" />
            </svg>
          </div>
        </div>
      </div>
    </div>
  </div>
)

export default function App() {
  return (
    <div className="relative w-[890px] h-[612px] overflow-hidden flex flex-col bg-[#6a6a6a] text-[12px] leading-[16px] text-[#1b1b2b] font-['Open_Sans',sans-serif] tracking-[-0.3px]">
      <TitleBar />
      <TabBar />
      <Ribbon />
      <div className="flex-1 min-h-0 flex">
        <div className="w-[588px] flex flex-col shrink-0">
          <DocArea />
          <BottomBar />
        </div>
        <div className="w-[8px] flex items-center shrink-0 bg-[#6a6a6a]">
          <div className="w-[6px] ml-[1px] h-[58px] bg-[#e4e4e4] flex items-center justify-center">
            <svg width="3" height="6" viewBox="0 0 3 6">
              <path d="M0 0l3 3-3 3z" fill="#333" />
            </svg>
          </div>
        </div>
        <PropsPanel />
      </div>
      <BlendPopup />
    </div>
  )
}
